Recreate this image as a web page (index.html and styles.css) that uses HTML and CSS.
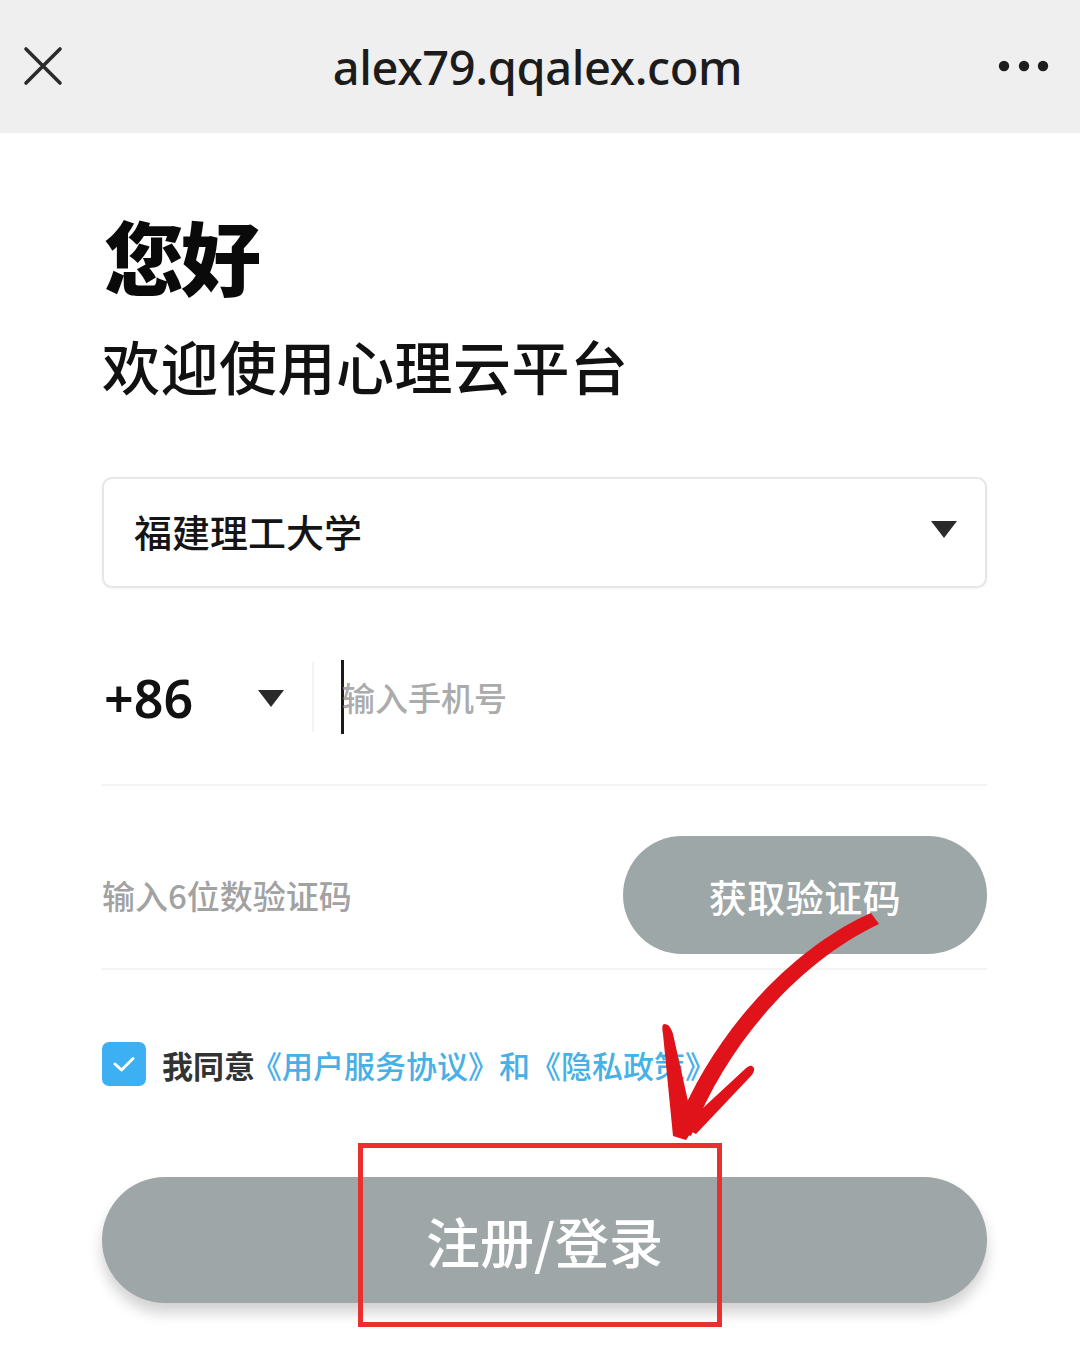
FILE: index.html
```html
<!DOCTYPE html>
<html lang="zh-CN">
<head>
<meta charset="utf-8">
<title>alex79.qqalex.com</title>
<link rel="stylesheet" href="styles.css">
</head>
<body>
<div class="page">
  <header class="topbar">
    <svg class="close" width="40" height="40" viewBox="0 0 40 40"><path d="M3 3 L37 37 M37 3 L3 37" stroke="#2b2b2b" stroke-width="3.6" stroke-linecap="round"/></svg>
    <div class="url">alex79.qqalex.com</div>
    <svg class="more" width="52" height="14" viewBox="0 0 52 14"><circle cx="6" cy="7" r="5.2" fill="#1d1d1d"/><circle cx="26" cy="7" r="5.2" fill="#1d1d1d"/><circle cx="45" cy="7" r="5.2" fill="#1d1d1d"/></svg>
  </header>

  <main class="content">
    <h1 class="hello">您好</h1>
    <p class="welcome">欢迎使用心理云平台</p>

    <div class="select">
      <span class="select-text">福建理工大学</span>
      <span class="tri tri-select"></span>
    </div>

    <div class="row phone-row">
      <span class="code">+86</span>
      <span class="tri tri-code"></span>
      <span class="divider"></span>
      <span class="cursor"></span>
      <span class="placeholder">输入手机号</span>
    </div>

    <div class="row sms-row">
      <span class="placeholder sms">输入6位数验证码</span>
      <button class="btn-code">获取验证码</button>
    </div>

    <div class="agree">
      <span class="checkbox"><svg width="24" height="18" viewBox="0 0 24 18"><path d="M3 9 L9.5 15 L21 3.5" stroke="#fff" stroke-width="3" fill="none" stroke-linecap="round" stroke-linejoin="round"/></svg></span>
      <span class="agree-text">我同意</span><span class="link">《用户服务协议》和《隐私政策》</span>
    </div>

    <button class="btn-main">注册/登录</button>
  </main>

  <svg class="annotation" width="1080" height="1363" viewBox="0 0 1080 1363">
    <rect x="360.5" y="1145.5" width="359" height="179" fill="none" stroke="#e8302f" stroke-width="5"/>
    <path d="M871 913 C800 944 716 1024 675 1130 L691 1136 C731 1034 807 958 879 924 Z" fill="#e0121a"/>
    <path d="M664 1024 C669 1024 671 1028 673 1034 L694 1128 L686 1140 L673 1136 L663 1034 C662 1028 662 1025 664 1024 Z" fill="#e0121a"/>
    <path d="M752 1066 C756 1068 754 1073 750 1077 L696 1134 L684 1128 L690 1120 L744 1070 C747 1067 750 1065 752 1066 Z" fill="#e0121a"/>
  </svg>
</div>
</body>
</html>
```

FILE: styles.css
```css
html, body {
  margin: 0;
  padding: 0;
  background: #ffffff;
}

.page {
  position: relative;
  width: 1080px;
  height: 1363px;
  overflow: hidden;
  font-family: "Noto Sans CJK SC", "Noto Sans", sans-serif;
  color: #111;
}

.topbar {
  height: 133px;
  background: #efefef;
  display: flex;
  align-items: center;
  justify-content: space-between;
  padding: 0 30px 0 23px;
  box-sizing: border-box;
}

.close {
  margin-top: -2px;
}

.url {
  font-family: "Noto Sans", "Open Sans", sans-serif;
  font-size: 47px;
  font-weight: 500;
  color: #1c1c1c;
  letter-spacing: -0.4px;
  margin-left: 14px;
  margin-bottom: 0;
}

.more {
  margin-top: -2px;
}

.content {
  padding: 0 93px 0 102px;
}

.hello {
  margin: 71px 0 0 2px;
  font-size: 80px;
  line-height: 100px;
  font-weight: 900;
  color: #0a0a0a;
  letter-spacing: -3px;
}

.welcome {
  margin: 26px 0 0 0;
  font-size: 58px;
  line-height: 70px;
  font-weight: 500;
  color: #111;
  letter-spacing: 0.5px;
}

.select {
  margin-top: 77px;
  height: 111px;
  border: 2px solid #e6e6e6;
  border-radius: 10px;
  box-sizing: border-box;
  display: flex;
  align-items: center;
  justify-content: space-between;
  padding: 0 28px 0 30px;
  box-shadow: 0 1px 3px rgba(0,0,0,0.05);
}

.select-text {
  font-size: 38px;
  font-weight: 500;
  color: #151515;
  margin-bottom: 4px;
}

.tri {
  width: 0;
  height: 0;
  border-left: 13px solid transparent;
  border-right: 13px solid transparent;
  border-top: 17px solid #2a2a2a;
}

.tri-select {
  margin-bottom: 6px;
}

.row {
  display: flex;
  align-items: center;
  border-bottom: 2px solid #f3f3f3;
}

.phone-row {
  margin-top: 42px;
  height: 156px;
  padding-bottom: 20px;
  box-sizing: border-box;
}

.code {
  font-family: "Noto Sans", sans-serif;
  font-size: 52px;
  font-weight: 600;
  color: #111;
  width: 154px;
  margin-left: 2px;
}

.tri-code {
  margin-left: 0;
  margin-top: 2px;
}

.divider {
  width: 2px;
  height: 70px;
  background: #f4f4f4;
  margin-left: 28px;
}

.cursor {
  width: 3px;
  height: 74px;
  background: #1a1a1a;
  margin-left: 27px;
}

.placeholder {
  font-size: 33px;
  color: #ababab;
  font-weight: 500;
  margin-left: -2px;
}

.sms-row {
  margin-top: 50px;
  justify-content: space-between;
  padding-bottom: 14px;
}

.placeholder.sms {
  color: #a2a2a2;
  margin-left: 0;
}

.btn-code {
  width: 364px;
  height: 118px;
  border: none;
  border-radius: 59px;
  background: #9ea7a8;
  color: #ffffff;
  font-family: "Noto Sans CJK SC", sans-serif;
  font-size: 38px;
  font-weight: 500;
  padding: 0;
  letter-spacing: 0.5px;
}

.agree {
  margin-top: 71px;
  display: flex;
  align-items: center;
  height: 46px;
}

.checkbox {
  width: 44px;
  height: 44px;
  border-radius: 7px;
  background: #3db0f3;
  display: flex;
  align-items: center;
  justify-content: center;
  margin-right: 16px;
}

.agree-text {
  font-size: 31px;
  font-weight: 700;
  color: #333;
}

.link {
  font-size: 31px;
  font-weight: 500;
  color: #47b0e6;
  margin-left: -4px;
}

.btn-main {
  display: block;
  margin-top: 90px;
  width: 885px;
  height: 126px;
  border: none;
  border-radius: 63px;
  background: #9ea6a8;
  color: #ffffff;
  font-family: "Noto Sans CJK SC", sans-serif;
  font-size: 54px;
  font-weight: 500;
  padding: 0;
  box-shadow: 0 10px 14px rgba(0,0,0,0.18);
}

.annotation {
  position: absolute;
  left: 0;
  top: 0;
  pointer-events: none;
}
```
